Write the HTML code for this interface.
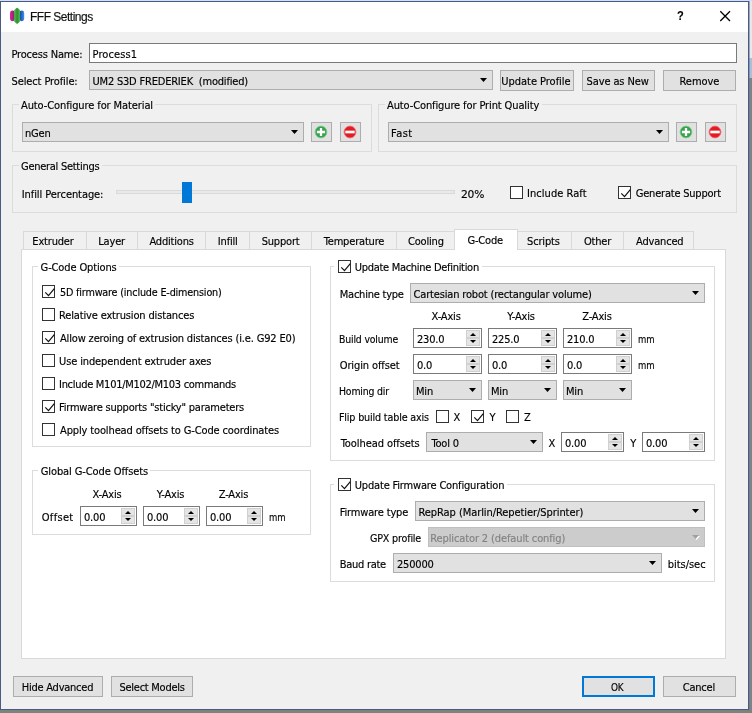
<!DOCTYPE html>
<html><head><meta charset="utf-8"><title>FFF Settings</title>
<style>
html,body{margin:0;padding:0}
body{width:752px;height:713px;overflow:hidden;position:relative;background:#80858a;font-family:"DejaVu Sans Condensed","Liberation Sans",sans-serif;font-size:11px;color:#000}
div,span,svg.a{position:absolute;box-sizing:border-box}
.t{-webkit-text-stroke-width:0.15px;white-space:pre;line-height:14px;height:14px}
.t.c{text-align:center}
.t.g{color:#838383}
.cb{background:#e1e1e1;border:1px solid #adadad}
.cb.dis{background:#cccccc;border-color:#bfbfbf}
.bt{background:#e1e1e1;border:1px solid #adadad}
.bt.df{border:2px solid #0078d7}
.ck{background:#fff;border:1px solid #333}
.sp{background:#fff;border:1px solid #7a7a7a}
.sb{background:#e5e5e5;border:1px solid #d0d0d0}
.gb{border:1px solid #dcdcdc}
.in{background:#fff;border:1px solid #7a7a7a}
</style></head><body><div id="w" style="left:0;top:0;width:752px;height:713px;will-change:transform">

<div class="" style="left:0px;top:0px;width:752px;height:713px;background:#7c837d"></div>
<div class="" style="left:749px;top:0px;width:3px;height:58px;background:#e6e8ea"></div>
<div class="" style="left:749px;top:58px;width:3px;height:20px;background:#a9c0d8"></div>
<div class="" style="left:749px;top:78px;width:3px;height:632px;background:#7e8386"></div>
<div class="" style="left:749px;top:1px;width:1px;height:709px;background:#6c7a98;opacity:.6"></div>
<div class="" style="left:0px;top:0px;width:752px;height:1px;background:#cfe0fc"></div>
<div class="" style="left:0px;top:1px;width:749px;height:709px;background:#f0f0f0;border:1px solid #4a5a84"></div>
<div class="" style="left:1px;top:2px;width:747px;height:30px;background:#fff"></div>
<svg class="a" style="left:9px;top:7px" width="17" height="18" viewBox="0 0 17 18">
<defs><linearGradient id="gm" x1="0" x2="1" y1="0" y2="0"><stop offset="0" stop-color="#e81f92"/><stop offset="1" stop-color="#6d2a78"/></linearGradient>
<linearGradient id="gb" x1="0" x2="1" y1="0" y2="0"><stop offset="0" stop-color="#1b3b8c"/><stop offset="1" stop-color="#3593f5"/></linearGradient>
<linearGradient id="gg" x1="0" x2="1" y1="0" y2="0"><stop offset="0" stop-color="#4cb848"/><stop offset=".5" stop-color="#2f8f34"/><stop offset="1" stop-color="#48b244"/></linearGradient></defs>
<rect x="1" y="3.6" width="5" height="10.6" rx="2.4" fill="url(#gm)"/>
<rect x="10.4" y="3.6" width="4.8" height="10.6" rx="2.4" fill="url(#gb)"/>
<path d="M8.1 1L10.6 3V14.6L8.1 16.6L5.6 14.6V3Z" fill="url(#gg)" stroke="url(#gg)" stroke-width="0.8" stroke-linejoin="round"/>
</svg>
<span id="title" class="t" style="left:30px;top:9px;font-family:'Liberation Sans',sans-serif;font-size:12px;line-height:16px;height:16px;letter-spacing:-0.5px;color:#111">FFF Settings</span>
<span class="t" style="left:677px;top:8px;font-family:'Liberation Sans',sans-serif;font-size:13px;font-weight:bold;line-height:16px;height:16px;transform:scaleX(.85);transform-origin:0 0">?</span>
<svg class="a" style="left:719px;top:10px" width="12" height="12" viewBox="0 0 12 12"><path d="M1.3 1.3L11 11M11 1.3L1.3 11" stroke="#000" stroke-width="1.3" fill="none"/></svg>
<span id="t0" class="t " style="left:11.5px;top:48px;letter-spacing:-0.180px;">Process Name:</span>
<div class="in" style="left:89px;top:43px;width:648px;height:20px;"></div>
<span id="t1" class="t " style="left:92.5px;top:48px;letter-spacing:0.106px;">Process1</span>
<span id="t2" class="t " style="left:11.5px;top:75px;letter-spacing:-0.109px;">Select Profile:</span>
<div class="cb" style="left:89px;top:70px;width:404px;height:20px;"></div>
<svg class="a" style="left:480px;top:78px" width="7" height="4" viewBox="0 0 7 4"><path d="M0 0H7L3.5 4Z" fill="#000"/></svg>
<span id="t3" class="t " style="left:92.5px;top:75px;letter-spacing:-0.198px;">UM2 S3D FREDERIEK  (modified)</span>
<div class="bt" style="left:500px;top:70px;width:74px;height:21px;"></div>
<span id="t4" class="t " style="left:501.25px;top:75px;letter-spacing:-0.026px;">Update Profile</span>
<div class="bt" style="left:582px;top:70px;width:73px;height:21px;"></div>
<span id="t5" class="t " style="left:586.5px;top:75px;letter-spacing:-0.105px;">Save as New</span>
<div class="bt" style="left:663px;top:70px;width:73px;height:21px;"></div>
<span id="t6" class="t " style="left:679.5px;top:75px;letter-spacing:-0.030px;">Remove</span>
<div class="gb" style="left:12px;top:104px;width:360px;height:48px;"></div>
<div class="" style="left:19px;top:98px;width:136px;height:13px;background:#f0f0f0"></div>
<span id="t7" class="t " style="left:21.0px;top:99px;letter-spacing:-0.103px;">Auto-Configure for Material</span>
<div class="cb" style="left:22px;top:122px;width:282px;height:20px;"></div>
<svg class="a" style="left:291px;top:130px" width="7" height="4" viewBox="0 0 7 4"><path d="M0 0H7L3.5 4Z" fill="#000"/></svg>
<span id="t8" class="t " style="left:25.0px;top:127px;letter-spacing:-0.180px;">nGen</span>
<div class="bt" style="left:311px;top:122px;width:21px;height:20px;"></div>
<svg class="a" style="left:314px;top:125px" width="14" height="14" viewBox="0 0 14 14"><circle cx="7" cy="7" r="5.9" fill="#34a34c" stroke="#7ccb8a" stroke-width="0.9"/><path d="M2.9 7H11.1M7 2.9V11.1" stroke="#fff" stroke-width="2.3" fill="none"/></svg>
<div class="bt" style="left:340px;top:122px;width:21px;height:20px;"></div>
<svg class="a" style="left:343px;top:125px" width="14" height="14" viewBox="0 0 14 14"><circle cx="7" cy="7" r="5.9" fill="#e41b23" stroke="#f0686d" stroke-width="0.9"/><path d="M2.3 7H11.7" stroke="#fff" stroke-width="2.7" fill="none"/></svg>
<div class="gb" style="left:378px;top:104px;width:359px;height:48px;"></div>
<div class="" style="left:385px;top:98px;width:157px;height:13px;background:#f0f0f0"></div>
<span id="t9" class="t " style="left:387.0px;top:99px;letter-spacing:-0.115px;">Auto-Configure for Print Quality</span>
<div class="cb" style="left:388px;top:122px;width:281px;height:20px;"></div>
<svg class="a" style="left:656px;top:130px" width="7" height="4" viewBox="0 0 7 4"><path d="M0 0H7L3.5 4Z" fill="#000"/></svg>
<span id="t10" class="t " style="left:391.0px;top:127px;letter-spacing:0.487px;">Fast</span>
<div class="bt" style="left:676px;top:122px;width:21px;height:20px;"></div>
<svg class="a" style="left:679px;top:125px" width="14" height="14" viewBox="0 0 14 14"><circle cx="7" cy="7" r="5.9" fill="#34a34c" stroke="#7ccb8a" stroke-width="0.9"/><path d="M2.9 7H11.1M7 2.9V11.1" stroke="#fff" stroke-width="2.3" fill="none"/></svg>
<div class="bt" style="left:705px;top:122px;width:21px;height:20px;"></div>
<svg class="a" style="left:708px;top:125px" width="14" height="14" viewBox="0 0 14 14"><circle cx="7" cy="7" r="5.9" fill="#e41b23" stroke="#f0686d" stroke-width="0.9"/><path d="M2.3 7H11.7" stroke="#fff" stroke-width="2.7" fill="none"/></svg>
<div class="gb" style="left:12px;top:165px;width:725px;height:48px;"></div>
<div class="" style="left:19px;top:159px;width:83px;height:13px;background:#f0f0f0"></div>
<span id="t11" class="t " style="left:21.0px;top:160px;letter-spacing:-0.280px;">General Settings</span>
<span id="t12" class="t " style="left:21.75px;top:188px;letter-spacing:-0.077px;">Infill Percentage:</span>
<div class="" style="left:116px;top:190px;width:339px;height:4px;background:#e7eaea;border:1px solid #d9d9d9"></div>
<div class="" style="left:182px;top:182px;width:10px;height:21px;background:#0078d7"></div>
<span id="t13" class="t " style="left:461.25px;top:188px;letter-spacing:-0.180px;transform:scaleX(1.0833);transform-origin:0 0;">20%</span>
<div class="ck" style="left:510px;top:186px;width:13px;height:13px;"></div>
<span id="t14" class="t " style="left:527.0px;top:187px;letter-spacing:0.047px;">Include Raft</span>
<div class="ck" style="left:618px;top:186px;width:13px;height:13px;"><svg width="13" height="13" viewBox="0 0 13 13" style="position:absolute;left:0;top:0"><path d="M2.3 6.3L5.5 9.6L11.3 2.6" fill="none" stroke="#111" stroke-width="1.2"/></svg></div>
<span id="t15" class="t " style="left:635.75px;top:187px;letter-spacing:-0.213px;">Generate Support</span>
<div class="" style="left:21px;top:249px;width:705px;height:410px;background:#fff;border:1px solid #d9d9d9"></div>
<div class="" style="left:23px;top:231px;width:64px;height:19px;background:#f0f0f0;border:1px solid #d9d9d9"></div>
<span id="t16" class="t c" style="left:13px;width:80px;top:235px;letter-spacing:-0.18px">Extruder</span>
<div class="" style="left:86px;top:231px;width:52px;height:19px;background:#f0f0f0;border:1px solid #d9d9d9"></div>
<span id="t17" class="t c" style="left:71.6px;width:80px;top:235px;letter-spacing:-0.18px">Layer</span>
<div class="" style="left:137px;top:231px;width:69px;height:19px;background:#f0f0f0;border:1px solid #d9d9d9"></div>
<span id="t18" class="t c" style="left:131.6px;width:80px;top:235px;letter-spacing:-0.18px">Additions</span>
<div class="" style="left:205px;top:231px;width:45px;height:19px;background:#f0f0f0;border:1px solid #d9d9d9"></div>
<span id="t19" class="t c" style="left:187.75px;width:80px;top:235px;letter-spacing:-0.18px">Infill</span>
<div class="" style="left:249px;top:231px;width:63px;height:19px;background:#f0f0f0;border:1px solid #d9d9d9"></div>
<span id="t20" class="t c" style="left:240.60000000000002px;width:80px;top:235px;letter-spacing:-0.18px">Support</span>
<div class="" style="left:311px;top:231px;width:86px;height:19px;background:#f0f0f0;border:1px solid #d9d9d9"></div>
<span id="t21" class="t c" style="left:314px;width:80px;top:235px;letter-spacing:-0.18px">Temperature</span>
<div class="" style="left:396px;top:231px;width:59px;height:19px;background:#f0f0f0;border:1px solid #d9d9d9"></div>
<span id="t22" class="t c" style="left:385.9px;width:80px;top:235px;letter-spacing:-0.18px">Cooling</span>
<div class="" style="left:517px;top:231px;width:55px;height:19px;background:#f0f0f0;border:1px solid #d9d9d9"></div>
<span id="t23" class="t c" style="left:503.4px;width:80px;top:235px;letter-spacing:-0.18px">Scripts</span>
<div class="" style="left:571px;top:231px;width:53px;height:19px;background:#f0f0f0;border:1px solid #d9d9d9"></div>
<span id="t24" class="t c" style="left:557.5px;width:80px;top:235px;letter-spacing:-0.18px">Other</span>
<div class="" style="left:623px;top:231px;width:71px;height:19px;background:#f0f0f0;border:1px solid #d9d9d9"></div>
<span id="t25" class="t c" style="left:619.75px;width:80px;top:235px;letter-spacing:-0.18px">Advanced</span>
<div class="" style="left:454px;top:229px;width:64px;height:21px;background:#fff;border:1px solid #d9d9d9;border-bottom:none"></div>
<span id="t26" class="t c" style="left:445.25px;width:80px;top:234px;letter-spacing:-0.18px">G-Code</span>
<div class="gb" style="left:32px;top:266px;width:279px;height:181px;"></div>
<div class="" style="left:38px;top:260px;width:81px;height:13px;background:#fff"></div>
<span id="t27" class="t " style="left:40.6px;top:261px;letter-spacing:-0.134px;">G-Code Options</span>
<div class="ck" style="left:42px;top:285px;width:13px;height:13px;"><svg width="13" height="13" viewBox="0 0 13 13" style="position:absolute;left:0;top:0"><path d="M2.3 6.3L5.5 9.6L11.3 2.6" fill="none" stroke="#111" stroke-width="1.2"/></svg></div>
<span id="t28" class="t " style="left:60.0px;top:286px;letter-spacing:-0.180px;transform:scaleX(0.9742);transform-origin:0 0;">5D firmware (include E-dimension)</span>
<div class="ck" style="left:42px;top:308px;width:13px;height:13px;"></div>
<span id="t29" class="t " style="left:59.0px;top:309px;letter-spacing:-0.152px;">Relative extrusion distances</span>
<div class="ck" style="left:42px;top:331px;width:13px;height:13px;"><svg width="13" height="13" viewBox="0 0 13 13" style="position:absolute;left:0;top:0"><path d="M2.3 6.3L5.5 9.6L11.3 2.6" fill="none" stroke="#111" stroke-width="1.2"/></svg></div>
<span id="t30" class="t " style="left:60.0px;top:332px;letter-spacing:-0.160px;">Allow zeroing of extrusion distances (i.e. G92 E0)</span>
<div class="ck" style="left:42px;top:354px;width:13px;height:13px;"></div>
<span id="t31" class="t " style="left:59.0px;top:355px;letter-spacing:-0.117px;">Use independent extruder axes</span>
<div class="ck" style="left:42px;top:377px;width:13px;height:13px;"></div>
<span id="t32" class="t " style="left:59.0px;top:378px;letter-spacing:-0.288px;">Include M101/M102/M103 commands</span>
<div class="ck" style="left:42px;top:400px;width:13px;height:13px;"><svg width="13" height="13" viewBox="0 0 13 13" style="position:absolute;left:0;top:0"><path d="M2.3 6.3L5.5 9.6L11.3 2.6" fill="none" stroke="#111" stroke-width="1.2"/></svg></div>
<span id="t33" class="t " style="left:59.0px;top:401px;letter-spacing:-0.208px;">Firmware supports &quot;sticky&quot; parameters</span>
<div class="ck" style="left:42px;top:423px;width:13px;height:13px;"></div>
<span id="t34" class="t " style="left:60.0px;top:424px;letter-spacing:-0.133px;">Apply toolhead offsets to G-Code coordinates</span>
<div class="gb" style="left:32px;top:470px;width:279px;height:65px;"></div>
<div class="" style="left:38px;top:464px;width:112px;height:13px;background:#fff"></div>
<span id="t35" class="t " style="left:40.75px;top:465px;letter-spacing:-0.105px;">Global G-Code Offsets</span>
<span id="t36" class="t " style="left:92.5px;top:488px;letter-spacing:-0.180px;">X-Axis</span>
<span id="t37" class="t " style="left:156.75px;top:488px;letter-spacing:-0.180px;">Y-Axis</span>
<span id="t38" class="t " style="left:218.75px;top:488px;letter-spacing:-0.180px;">Z-Axis</span>
<span id="t39" class="t " style="left:41.75px;top:511px;letter-spacing:0.320px;">Offset</span>
<div class="sp" style="left:80px;top:506px;width:57px;height:20px;"></div>
<div class="sb" style="left:121px;top:508px;width:14px;height:8px;"></div>
<div class="sb" style="left:121px;top:516px;width:14px;height:8px;"></div>
<svg class="a" style="left:125px;top:511px" width="6" height="3" viewBox="0 0 6 3"><path d="M0 3H6L3 0Z" fill="#000"/></svg>
<svg class="a" style="left:125px;top:518px" width="6" height="3" viewBox="0 0 6 3"><path d="M0 0H6L3 3Z" fill="#000"/></svg>
<span id="t40" class="t " style="left:84.0px;top:511px;letter-spacing:-0.180px;">0.00</span>
<div class="sp" style="left:143px;top:506px;width:57px;height:20px;"></div>
<div class="sb" style="left:184px;top:508px;width:14px;height:8px;"></div>
<div class="sb" style="left:184px;top:516px;width:14px;height:8px;"></div>
<svg class="a" style="left:188px;top:511px" width="6" height="3" viewBox="0 0 6 3"><path d="M0 3H6L3 0Z" fill="#000"/></svg>
<svg class="a" style="left:188px;top:518px" width="6" height="3" viewBox="0 0 6 3"><path d="M0 0H6L3 3Z" fill="#000"/></svg>
<span id="t41" class="t " style="left:147.0px;top:511px;letter-spacing:-0.180px;">0.00</span>
<div class="sp" style="left:206px;top:506px;width:57px;height:20px;"></div>
<div class="sb" style="left:247px;top:508px;width:14px;height:8px;"></div>
<div class="sb" style="left:247px;top:516px;width:14px;height:8px;"></div>
<svg class="a" style="left:251px;top:511px" width="6" height="3" viewBox="0 0 6 3"><path d="M0 3H6L3 0Z" fill="#000"/></svg>
<svg class="a" style="left:251px;top:518px" width="6" height="3" viewBox="0 0 6 3"><path d="M0 0H6L3 3Z" fill="#000"/></svg>
<span id="t42" class="t " style="left:210.0px;top:511px;letter-spacing:-0.180px;">0.00</span>
<span id="t43" class="t " style="left:268.5px;top:511px;letter-spacing:-0.180px;transform:scaleX(0.8611);transform-origin:0 0;">mm</span>
<div class="gb" style="left:330px;top:266px;width:385px;height:195px;"></div>
<div class="" style="left:334px;top:260px;width:148px;height:13px;background:#fff"></div>
<div class="ck" style="left:338px;top:260px;width:13px;height:13px;"><svg width="13" height="13" viewBox="0 0 13 13" style="position:absolute;left:0;top:0"><path d="M2.3 6.3L5.5 9.6L11.3 2.6" fill="none" stroke="#111" stroke-width="1.2"/></svg></div>
<span id="t44" class="t " style="left:354.75px;top:261px;letter-spacing:-0.295px;">Update Machine Definition</span>
<span id="t45" class="t " style="left:339.75px;top:288px;letter-spacing:-0.225px;">Machine type</span>
<div class="cb" style="left:410px;top:283px;width:295px;height:20px;"></div>
<svg class="a" style="left:692px;top:291px" width="7" height="4" viewBox="0 0 7 4"><path d="M0 0H7L3.5 4Z" fill="#000"/></svg>
<span id="t46" class="t " style="left:413.5px;top:288px;letter-spacing:-0.166px;">Cartesian robot (rectangular volume)</span>
<span id="t47" class="t " style="left:431.6px;top:310px;letter-spacing:-0.180px;">X-Axis</span>
<span id="t48" class="t " style="left:507.25px;top:310px;letter-spacing:-0.180px;">Y-Axis</span>
<span id="t49" class="t " style="left:582.25px;top:310px;letter-spacing:-0.180px;">Z-Axis</span>
<span id="t50" class="t " style="left:338.75px;top:333px;letter-spacing:-0.180px;transform:scaleX(0.9435);transform-origin:0 0;">Build volume</span>
<div class="sp" style="left:413px;top:328px;width:69px;height:20px;"></div>
<div class="sb" style="left:466px;top:330px;width:14px;height:8px;"></div>
<div class="sb" style="left:466px;top:338px;width:14px;height:8px;"></div>
<svg class="a" style="left:470px;top:333px" width="6" height="3" viewBox="0 0 6 3"><path d="M0 3H6L3 0Z" fill="#000"/></svg>
<svg class="a" style="left:470px;top:340px" width="6" height="3" viewBox="0 0 6 3"><path d="M0 0H6L3 3Z" fill="#000"/></svg>
<span id="t51" class="t " style="left:417.0px;top:333px;letter-spacing:-0.180px;">230.0</span>
<div class="sp" style="left:488px;top:328px;width:69px;height:20px;"></div>
<div class="sb" style="left:541px;top:330px;width:14px;height:8px;"></div>
<div class="sb" style="left:541px;top:338px;width:14px;height:8px;"></div>
<svg class="a" style="left:545px;top:333px" width="6" height="3" viewBox="0 0 6 3"><path d="M0 3H6L3 0Z" fill="#000"/></svg>
<svg class="a" style="left:545px;top:340px" width="6" height="3" viewBox="0 0 6 3"><path d="M0 0H6L3 3Z" fill="#000"/></svg>
<span id="t52" class="t " style="left:492.0px;top:333px;letter-spacing:-0.180px;">225.0</span>
<div class="sp" style="left:563px;top:328px;width:69px;height:20px;"></div>
<div class="sb" style="left:616px;top:330px;width:14px;height:8px;"></div>
<div class="sb" style="left:616px;top:338px;width:14px;height:8px;"></div>
<svg class="a" style="left:620px;top:333px" width="6" height="3" viewBox="0 0 6 3"><path d="M0 3H6L3 0Z" fill="#000"/></svg>
<svg class="a" style="left:620px;top:340px" width="6" height="3" viewBox="0 0 6 3"><path d="M0 0H6L3 3Z" fill="#000"/></svg>
<span id="t53" class="t " style="left:567.0px;top:333px;letter-spacing:-0.180px;">210.0</span>
<span id="t54" class="t " style="left:637.75px;top:333px;letter-spacing:-0.180px;transform:scaleX(0.8611);transform-origin:0 0;">mm</span>
<span id="t55" class="t " style="left:339.75px;top:359px;letter-spacing:-0.117px;">Origin offset</span>
<div class="sp" style="left:413px;top:354px;width:69px;height:20px;"></div>
<div class="sb" style="left:466px;top:356px;width:14px;height:8px;"></div>
<div class="sb" style="left:466px;top:364px;width:14px;height:8px;"></div>
<svg class="a" style="left:470px;top:359px" width="6" height="3" viewBox="0 0 6 3"><path d="M0 3H6L3 0Z" fill="#000"/></svg>
<svg class="a" style="left:470px;top:366px" width="6" height="3" viewBox="0 0 6 3"><path d="M0 0H6L3 3Z" fill="#000"/></svg>
<span id="t56" class="t " style="left:417.0px;top:359px;letter-spacing:-0.180px;">0.0</span>
<div class="sp" style="left:488px;top:354px;width:69px;height:20px;"></div>
<div class="sb" style="left:541px;top:356px;width:14px;height:8px;"></div>
<div class="sb" style="left:541px;top:364px;width:14px;height:8px;"></div>
<svg class="a" style="left:545px;top:359px" width="6" height="3" viewBox="0 0 6 3"><path d="M0 3H6L3 0Z" fill="#000"/></svg>
<svg class="a" style="left:545px;top:366px" width="6" height="3" viewBox="0 0 6 3"><path d="M0 0H6L3 3Z" fill="#000"/></svg>
<span id="t57" class="t " style="left:492.0px;top:359px;letter-spacing:-0.180px;">0.0</span>
<div class="sp" style="left:563px;top:354px;width:69px;height:20px;"></div>
<div class="sb" style="left:616px;top:356px;width:14px;height:8px;"></div>
<div class="sb" style="left:616px;top:364px;width:14px;height:8px;"></div>
<svg class="a" style="left:620px;top:359px" width="6" height="3" viewBox="0 0 6 3"><path d="M0 3H6L3 0Z" fill="#000"/></svg>
<svg class="a" style="left:620px;top:366px" width="6" height="3" viewBox="0 0 6 3"><path d="M0 0H6L3 3Z" fill="#000"/></svg>
<span id="t58" class="t " style="left:567.0px;top:359px;letter-spacing:-0.180px;">0.0</span>
<span id="t59" class="t " style="left:637.75px;top:359px;letter-spacing:-0.180px;transform:scaleX(0.8611);transform-origin:0 0;">mm</span>
<span id="t60" class="t " style="left:338.75px;top:385px;letter-spacing:-0.180px;transform:scaleX(0.9438);transform-origin:0 0;">Homing dir</span>
<div class="cb" style="left:413px;top:380px;width:69px;height:20px;"></div>
<svg class="a" style="left:469px;top:388px" width="7" height="4" viewBox="0 0 7 4"><path d="M0 0H7L3.5 4Z" fill="#000"/></svg>
<span id="t61" class="t " style="left:416.0px;top:385px;letter-spacing:-0.180px;">Min</span>
<div class="cb" style="left:488px;top:380px;width:69px;height:20px;"></div>
<svg class="a" style="left:544px;top:388px" width="7" height="4" viewBox="0 0 7 4"><path d="M0 0H7L3.5 4Z" fill="#000"/></svg>
<span id="t62" class="t " style="left:491.0px;top:385px;letter-spacing:-0.180px;">Min</span>
<div class="cb" style="left:563px;top:380px;width:69px;height:20px;"></div>
<svg class="a" style="left:619px;top:388px" width="7" height="4" viewBox="0 0 7 4"><path d="M0 0H7L3.5 4Z" fill="#000"/></svg>
<span id="t63" class="t " style="left:566.0px;top:385px;letter-spacing:-0.180px;">Min</span>
<span id="t64" class="t " style="left:338.75px;top:411px;letter-spacing:-0.180px;transform:scaleX(0.9728);transform-origin:0 0;">Flip build table axis</span>
<div class="ck" style="left:436px;top:410px;width:13px;height:13px;"></div>
<span id="t65" class="t " style="left:453.5px;top:411px;letter-spacing:-0.180px;">X</span>
<div class="ck" style="left:471px;top:410px;width:13px;height:13px;"><svg width="13" height="13" viewBox="0 0 13 13" style="position:absolute;left:0;top:0"><path d="M2.3 6.3L5.5 9.6L11.3 2.6" fill="none" stroke="#111" stroke-width="1.2"/></svg></div>
<span id="t66" class="t " style="left:489.5px;top:411px;letter-spacing:-0.180px;">Y</span>
<div class="ck" style="left:506px;top:410px;width:13px;height:13px;"></div>
<span id="t67" class="t " style="left:524.0px;top:411px;letter-spacing:-0.180px;">Z</span>
<span id="t68" class="t " style="left:340.75px;top:437px;letter-spacing:-0.080px;">Toolhead offsets</span>
<div class="cb" style="left:426px;top:432px;width:117px;height:20px;"></div>
<svg class="a" style="left:530px;top:440px" width="7" height="4" viewBox="0 0 7 4"><path d="M0 0H7L3.5 4Z" fill="#000"/></svg>
<span id="t69" class="t " style="left:431.5px;top:437px;letter-spacing:-0.180px;">Tool 0</span>
<span id="t70" class="t " style="left:548.5px;top:437px;letter-spacing:-0.180px;">X</span>
<div class="sp" style="left:561px;top:432px;width:63px;height:20px;"></div>
<div class="sb" style="left:608px;top:434px;width:14px;height:8px;"></div>
<div class="sb" style="left:608px;top:442px;width:14px;height:8px;"></div>
<svg class="a" style="left:612px;top:437px" width="6" height="3" viewBox="0 0 6 3"><path d="M0 3H6L3 0Z" fill="#000"/></svg>
<svg class="a" style="left:612px;top:444px" width="6" height="3" viewBox="0 0 6 3"><path d="M0 0H6L3 3Z" fill="#000"/></svg>
<span id="t71" class="t " style="left:565.0px;top:437px;letter-spacing:-0.180px;">0.00</span>
<span id="t72" class="t " style="left:630.25px;top:437px;letter-spacing:-0.180px;">Y</span>
<div class="sp" style="left:642px;top:432px;width:63px;height:20px;"></div>
<div class="sb" style="left:689px;top:434px;width:14px;height:8px;"></div>
<div class="sb" style="left:689px;top:442px;width:14px;height:8px;"></div>
<svg class="a" style="left:693px;top:437px" width="6" height="3" viewBox="0 0 6 3"><path d="M0 3H6L3 0Z" fill="#000"/></svg>
<svg class="a" style="left:693px;top:444px" width="6" height="3" viewBox="0 0 6 3"><path d="M0 0H6L3 3Z" fill="#000"/></svg>
<span id="t73" class="t " style="left:646.0px;top:437px;letter-spacing:-0.180px;">0.00</span>
<div class="gb" style="left:330px;top:484px;width:385px;height:98px;"></div>
<div class="" style="left:334px;top:478px;width:173px;height:13px;background:#fff"></div>
<div class="ck" style="left:338px;top:478px;width:13px;height:13px;"><svg width="13" height="13" viewBox="0 0 13 13" style="position:absolute;left:0;top:0"><path d="M2.3 6.3L5.5 9.6L11.3 2.6" fill="none" stroke="#111" stroke-width="1.2"/></svg></div>
<span id="t74" class="t " style="left:354.75px;top:479px;letter-spacing:-0.171px;">Update Firmware Configuration</span>
<span id="t75" class="t " style="left:339.75px;top:506px;letter-spacing:-0.159px;">Firmware type</span>
<div class="cb" style="left:415px;top:501px;width:290px;height:20px;"></div>
<svg class="a" style="left:692px;top:509px" width="7" height="4" viewBox="0 0 7 4"><path d="M0 0H7L3.5 4Z" fill="#000"/></svg>
<span id="t76" class="t " style="left:418.5px;top:506px;letter-spacing:-0.071px;">RepRap (Marlin/Repetier/Sprinter)</span>
<span id="t77" class="t " style="left:369.75px;top:532px;letter-spacing:-0.180px;transform:scaleX(0.9670);transform-origin:0 0;">GPX profile</span>
<div class="cb dis" style="left:428px;top:527px;width:277px;height:20px;"></div>
<svg class="a" style="left:693px;top:536px" width="7" height="4" viewBox="0 0 7 4"><path d="M0 0H7L3.5 4Z" fill="#fff"/></svg>
<svg class="a" style="left:692px;top:535px" width="7" height="4" viewBox="0 0 7 4"><path d="M0 0H7L3.5 4Z" fill="#a0a0a0"/></svg>
<span id="t78" class="t g" style="left:430.25px;top:532px;letter-spacing:-0.117px;">Replicator 2 (default config)</span>
<span id="t79" class="t " style="left:339.75px;top:558px;letter-spacing:-0.274px;">Baud rate</span>
<div class="cb" style="left:393px;top:553px;width:269px;height:20px;"></div>
<svg class="a" style="left:649px;top:561px" width="7" height="4" viewBox="0 0 7 4"><path d="M0 0H7L3.5 4Z" fill="#000"/></svg>
<span id="t80" class="t " style="left:397.0px;top:558px;letter-spacing:-0.180px;">250000</span>
<span id="t81" class="t " style="left:667.75px;top:558px;letter-spacing:-0.037px;">bits/sec</span>
<div class="bt" style="left:13px;top:676px;width:90px;height:21px;"></div>
<span id="t82" class="t " style="left:21.75px;top:681px;letter-spacing:-0.242px;">Hide Advanced</span>
<div class="bt" style="left:111px;top:676px;width:82px;height:21px;"></div>
<span id="t83" class="t " style="left:119.5px;top:681px;letter-spacing:-0.263px;">Select Models</span>
<div class="bt df" style="left:582px;top:676px;width:73px;height:21px;"></div>
<span id="t84" class="t " style="left:610.75px;top:681px;letter-spacing:-0.180px;transform:scaleX(0.8957);transform-origin:0 0;">OK</span>
<div class="bt" style="left:663px;top:676px;width:73px;height:21px;"></div>
<span id="t85" class="t " style="left:682.75px;top:681px;letter-spacing:-0.230px;">Cancel</span>
</div></body></html>
